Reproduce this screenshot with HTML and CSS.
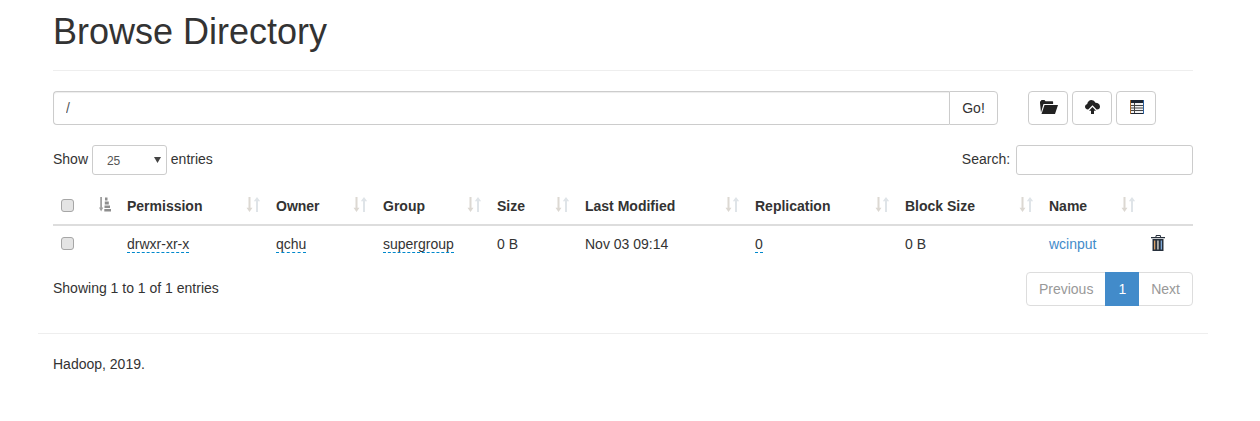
FILE: index.html
```html
<!DOCTYPE html>
<html lang="en">
<head>
  <meta charset="UTF-8" />
  <title>Browsing HDFS</title>
  <link rel="stylesheet" href="styles.css">
</head>
<body>
  <div class="container">
    <div class="page-header">
      <h1>Browse Directory</h1>
    </div>

    <div class="path-row">
      <div class="input-group">
        <input type="text" class="path-input" value="/" />
        <button class="btn go-btn">Go!</button>
      </div>
      <div class="tools">
        <button class="btn tool-btn" title="Create Directory">
          <svg class="icon-folder" width="18" height="14" viewBox="0 0 18 14"><path fill="#222" d="M1 12.500 0 3V1.800Q0 1.200.6 1.200L1.500 0h3l1 1.200h7q.6 0 .6.6V4H3.500z"/><path fill="#222" d="M4.500 5H18L15 14H1.500z"/></svg>
        </button>
        <button class="btn tool-btn" title="Upload Files">
          <svg class="icon-cloud" width="15" height="14" viewBox="0 0 15 14"><path fill="#222" d="M3.200 9.500H3Q0 9.300 0 6.600 0 4.500 2.200 4 3 .3 6.500 0 9.300 0 10.500 2.700 14.500 2.700 15 6.400 15 9.300 12 9.500h-.4L7.500 5.200z"/><path fill="#222" d="M7.500 7 11 10.700H9V14H6V10.700H4z"/></svg>
        </button>
        <button class="btn tool-btn" title="Cut / Paste">
          <svg class="icon-list" width="14" height="14" viewBox="0 0 14 14"><rect width="14" height="14" fill="#1d2430"/><rect x="1" y="3" width="12" height="10" fill="#f2f2f2"/><rect y="0" width="1" height="14" fill="#a8682c"/><rect x="13" y="0" width="1" height="14" fill="#2a5f9e"/><path stroke="#444" d="M1 5.500h12M1 8h12M1 10.500h12"/><path stroke="#444" d="M4.500 3v10"/></svg>
        </button>
      </div>
    </div>

    <div class="table-top">
      <label class="length-label">Show
        <select class="length-select"><option>25</option><option>50</option><option>100</option></select>
        entries</label>
      <label class="search-label">Search: <input type="search" class="search-input" /></label>
    </div>

    <table class="explorer">
      <colgroup>
        <col class="c-check"><col class="c-order"><col class="c-perm"><col class="c-owner"><col class="c-group"><col class="c-size"><col class="c-mod"><col class="c-repl"><col class="c-block"><col class="c-name"><col class="c-del">
      </colgroup>
      <thead>
        <tr>
          <th><input type="checkbox" class="check" /></th>
          <th><div class="head head-end">
            <svg class="sort-asc" width="12" height="15" viewBox="0 0 12 15"><path fill="#a0a0a0" d="M1.200 0h1.800v10.500h1.300L2.100 14.500 0 10.500h1.200z"/><path fill="#8e8e8e" d="M6 .5h2.500v3H6zM5.800 4.500h4v3h-4zM5.500 8.500h5.500v2.500H5.500zM5.300 12H12v2.500H5.300z"/></svg>
          </div></th>
          <th><div class="head">Permission<svg class="sort" width="15" height="15" viewBox="0 0 15 15"><use href="#both"/></svg></div></th>
          <th><div class="head">Owner<svg class="sort" width="15" height="15" viewBox="0 0 15 15"><use href="#both"/></svg></div></th>
          <th><div class="head">Group<svg class="sort" width="15" height="15" viewBox="0 0 15 15"><use href="#both"/></svg></div></th>
          <th><div class="head">Size<svg class="sort" width="15" height="15" viewBox="0 0 15 15"><use href="#both"/></svg></div></th>
          <th><div class="head">Last Modified<svg class="sort" width="15" height="15" viewBox="0 0 15 15"><use href="#both"/></svg></div></th>
          <th><div class="head">Replication<svg class="sort" width="15" height="15" viewBox="0 0 15 15"><use href="#both"/></svg></div></th>
          <th><div class="head">Block Size<svg class="sort" width="15" height="15" viewBox="0 0 15 15"><use href="#both"/></svg></div></th>
          <th><div class="head">Name<svg class="sort" width="15" height="15" viewBox="0 0 15 15"><use href="#both"/></svg></div></th>
          <th></th>
        </tr>
      </thead>
      <tbody>
        <tr>
          <td><input type="checkbox" class="check" /></td>
          <td></td>
          <td><a class="editable">drwxr-xr-x</a></td>
          <td><a class="editable">qchu</a></td>
          <td><a class="editable">supergroup</a></td>
          <td>0 B</td>
          <td>Nov 03 09:14</td>
          <td><a class="editable">0</a></td>
          <td>0 B</td>
          <td><a class="file-link" href="#">wcinput</a></td>
          <td><svg class="trash" width="14" height="16" viewBox="0 0 14 16"><path fill="#27303c" d="M5 0h4.500l.7 2H14v1.300H0V2h4.300zM5.600 1 5.400 2h3.700l-.3-1z" fill-rule="evenodd"/><path fill="#27303c" d="M1.500 4h11v12h-11z"/><path fill="#d9a066" d="M3 5.500h1.300v9H3z"/><path fill="#e8e4da" d="M6.300 5.500h1.300v9H6.300z"/><path fill="#7fa8d6" d="M9.700 5.500H11v9H9.700z"/></svg></td>
        </tr>
      </tbody>
    </table>

    <div class="table-bottom">
      <div class="info">Showing 1 to 1 of 1 entries</div>
      <div class="pagination">
        <a class="page disabled">Previous</a>
        <a class="page active">1</a>
        <a class="page disabled">Next</a>
      </div>
    </div>
  </div>

  <div class="container footer-wrap">
    <hr class="rule" />
    <p class="credit">Hadoop, 2019.</p>
  </div>

  <svg width="0" height="0" class="defs">
    <defs>
      <g id="both">
        <path fill="#dcd8d2" d="M2.500 0h2v10.800h2L3.500 15 .5 10.800h2z"/>
        <path fill="#dfe4e8" d="M10 15h2V4.200h2.200L11 0 7.800 4.200H10z"/>
      </g>
    </defs>
  </svg>
</body>
</html>
```

FILE: styles.css
```css
* {
  box-sizing: border-box;
}
body {
  margin: 0;
  font-family: "Liberation Sans", Arial, sans-serif;
  font-size: 14px;
  line-height: 20px;
  color: #333;
  background: #fff;
}
.container {
  width: 1170px;
  margin-left: 38px;
  padding: 0 15px;
}
.page-header {
  padding: 12px 0 18px;
  margin-bottom: 20px;
  border-bottom: 1px solid #eee;
}
h1 {
  margin: 0;
  font-size: 36px;
  font-weight: 500;
  line-height: 40px;
}
.path-row {
  display: flex;
  align-items: center;
  margin-bottom: 20px;
}
.input-group {
  display: flex;
  width: 945px;
}
.path-input {
  flex: 1;
  height: 34px;
  padding: 6px 12px;
  font: inherit;
  color: #555;
  border: 1px solid #ccc;
  border-right: 0;
  border-radius: 4px 0 0 4px;
  box-shadow: inset 0 1px 1px rgba(0,0,0,0.075);
}
.btn {
  height: 34px;
  padding: 6px 12px;
  font: inherit;
  color: #333;
  background: #fff;
  border: 1px solid #ccc;
  border-radius: 4px;
}
.go-btn {
  width: 49px;
  border-radius: 0 4px 4px 0;
}
.tools {
  display: flex;
  gap: 4px;
  margin-left: 30px;
}
.tool-btn {
  display: flex;
  align-items: center;
  justify-content: center;
  width: 40px;
  padding: 0 0 2px;
}
.icon-folder {
  margin-left: 2px;
}
.icon-list {
  margin-left: 2px;
}
.table-top {
  display: flex;
  justify-content: space-between;
  align-items: center;
  height: 30px;
  margin-bottom: 11px;
}
label {
  font-weight: 400;
}
.length-select {
  appearance: none;
  width: 75px;
  height: 30px;
  padding: 5px 10px 5px 14px;
  font: inherit;
  font-size: 12px;
  color: #555;
  vertical-align: middle;
  background: #fff url("data:image/svg+xml,%3Csvg xmlns='http://www.w3.org/2000/svg' width='7' height='6'%3E%3Cpath fill='%23444' d='M0 0h7L3.500 6z'/%3E%3C/svg%3E") no-repeat right 5px center;
  border: 1px solid #ccc;
  border-radius: 3px;
}
.search-input {
  width: 177px;
  height: 30px;
  margin-left: 2px;
  padding: 5px 10px;
  font-size: 12px;
  border: 1px solid #ccc;
  border-radius: 3px;
  vertical-align: middle;
}
.explorer {
  width: 1140px;
  table-layout: fixed;
  border-collapse: collapse;
}
.c-check { width: 37px; }
.c-order { width: 29px; }
.c-perm { width: 149px; }
.c-owner { width: 107px; }
.c-group { width: 114px; }
.c-size { width: 88px; }
.c-mod { width: 170px; }
.c-repl { width: 150px; }
.c-block { width: 144px; }
.c-name { width: 102px; }
.c-del { width: 50px; }
th {
  height: 39px;
  padding: 9px 8px 7px;
  text-align: left;
  font-weight: 700;
  border-bottom: 2px solid #ddd;
}
td {
  height: 37px;
  padding: 8px;
  vertical-align: top;
}
.head {
  display: flex;
  justify-content: space-between;
  align-items: center;
}
.head-end {
  justify-content: flex-end;
}
.sort {
  display: block;
  margin: -4px -1px 0 0;
}
.sort-asc {
  display: block;
  margin-top: -4px;
}
.check {
  appearance: none;
  display: block;
  width: 13px;
  height: 13px;
  margin: 0;
  background: #e4e4e4;
  border: 1px solid #a6a6a6;
  border-radius: 3px;
}
th .check {
  margin-top: -2px;
}
td .check {
  margin-top: 3px;
}
.editable {
  color: #333;
  border-bottom: 1px dashed #08c;
}
.file-link {
  color: #428bca;
  text-decoration: none;
}
.trash {
  display: block;
  margin-top: 1px;
}
.table-bottom {
  display: flex;
  justify-content: space-between;
  align-items: flex-start;
  margin-top: 10px;
}
.info {
  padding-top: 6px;
}
.pagination {
  display: flex;
}
.page {
  height: 34px;
  padding: 6px 12px;
  border: 1px solid #ddd;
  margin-left: -1px;
  background: #fff;
}
.page:first-child {
  border-radius: 4px 0 0 4px;
}
.page:last-child {
  border-radius: 0 4px 4px 0;
}
.page.disabled {
  color: #999;
}
.page.active {
  position: relative;
  z-index: 1;
  color: #fff;
  background: #428bca;
  border-color: #428bca;
}
.footer-wrap {
  margin-top: 27px;
}
.rule {
  margin: 0 -15px 20px;
  border: 0;
  border-top: 1px solid #eee;
}
.credit {
  margin: 0;
}
.defs {
  display: block;
}
```
